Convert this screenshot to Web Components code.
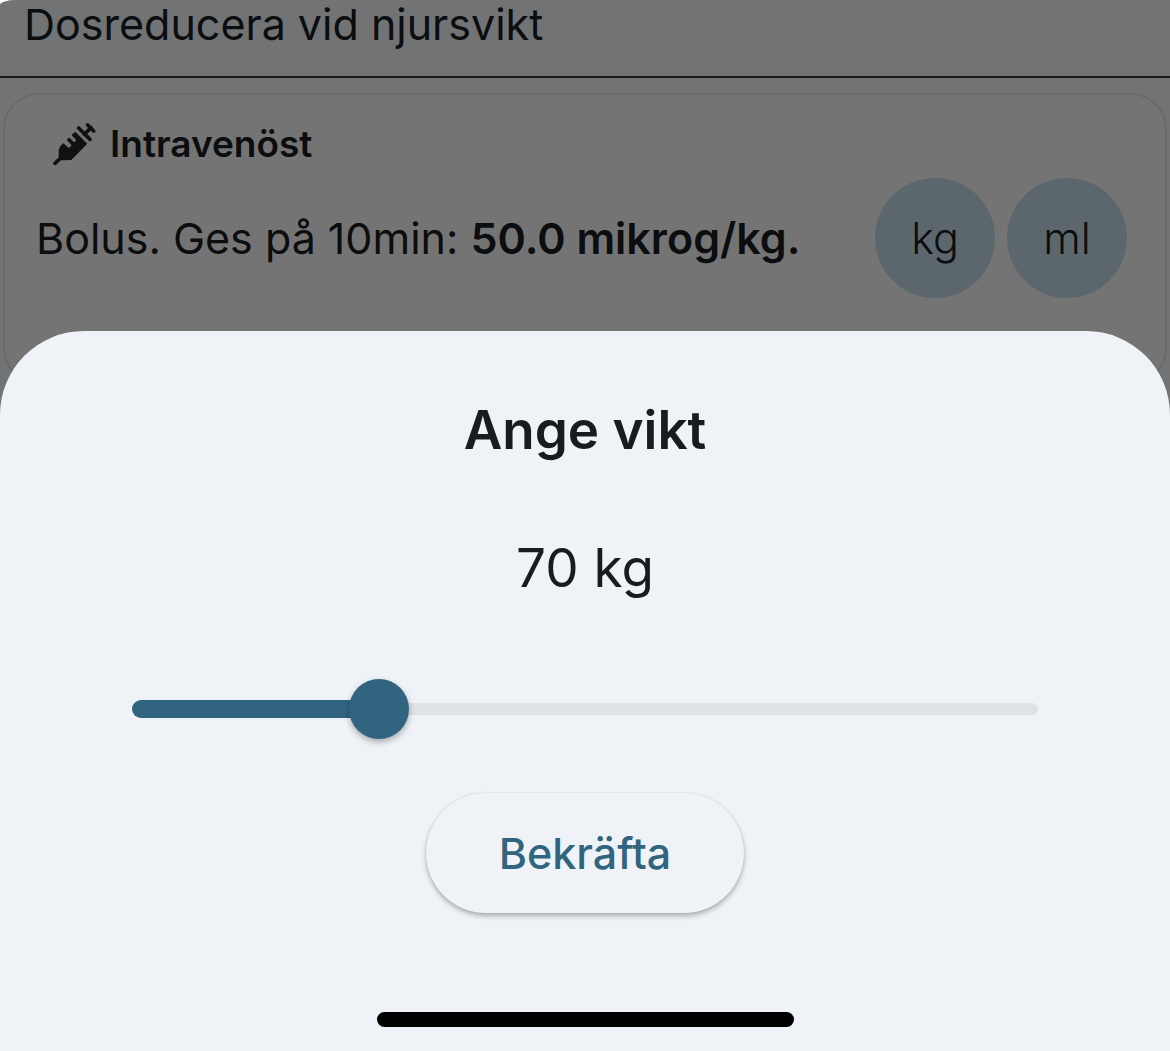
<!DOCTYPE html>
<html lang="sv">
<head>
<meta charset="utf-8">
<meta name="viewport" content="width=device-width, initial-scale=1">
<title>Ange vikt</title>
<style>
  html { height: 100%; background: #fff; }
  body { margin: 0; min-height: 100%; display: flex; color: #0b0d0e; font-family: Inter, Roboto, sans-serif; }
</style>
</head>
<body>
<dose-page>
  <dose-note slot="note">Dosreducera vid njursvikt</dose-note>
  <dose-card heading="Intravenöst">
    Bolus. Ges på 10min: <b>50.0 mikrog/kg.</b>
    <unit-button slot="units">kg</unit-button>
    <unit-button slot="units">ml</unit-button>
  </dose-card>
  <weight-sheet slot="sheet" heading="Ange vikt" value="70" max="260"></weight-sheet>
</dose-page>

<script>
class DosePage extends HTMLElement {
  constructor() {
    super();
    this.attachShadow({ mode: 'open' }).innerHTML = `
      <style>
        :host { display: block; flex: 1; min-width: 0; background: #717375; border-top-left-radius: 16px 5px; }
        main { padding: 15px 3px; }
      </style>
      <slot name="note"></slot>
      <main><slot></slot></main>
      <slot name="sheet"></slot>`;
  }
}

class DoseNote extends HTMLElement {
  constructor() {
    super();
    this.attachShadow({ mode: 'open' }).innerHTML = `
      <style>
        :host { display: block; border-bottom: 2px solid #17191a; }
        p { margin: 0; padding: 0 24px 28px; font-size: 43px; line-height: 48px; }
      </style>
      <p><slot></slot></p>`;
  }
}

class DoseCard extends HTMLElement {
  constructor() {
    super();
    this.attachShadow({ mode: 'open' }).innerHTML = `
      <style>
        :host { display: block; background: #747474; border: 2px solid #696a6c; border-radius: 36px; padding: 26px 38px 84px 31px; }
        h2 { display: flex; align-items: center; gap: 14px; margin: 0 0 11px; padding-left: 17px; font-size: 37px; line-height: 46px; font-weight: 600; }
        svg { width: 43px; height: 43px; }
        .row { display: flex; align-items: center; justify-content: space-between; gap: 12px; }
        p { margin: 0; flex: 1; font-size: 43px; line-height: 48px; }
        ::slotted(b) { font-weight: 600; }
        .units { display: flex; gap: 12px; }
      </style>
      <h2>
        <svg viewBox="39 36 129 129" aria-hidden="true" fill="none" stroke="#111" stroke-width="11" stroke-linecap="round">
          <path d="M45 157 62 141M116 51 150 85M133 70 153 50M143 42 161 60"/>
          <path fill="#111" stroke-width="4" stroke-linejoin="round" d="M58 118 62 107 70 99 86 114 98 103 83 87 87 82 102 97 112 87 97 72 106 65 139 98 93 145 66 146 58 140Z"/>
        </svg>
        <span></span>
      </h2>
      <div class="row"><p><slot></slot></p><div class="units"><slot name="units"></slot></div></div>`;
    this.shadowRoot.querySelector('span').textContent = this.getAttribute('heading');
  }
}

class UnitButton extends HTMLElement {
  constructor() {
    super();
    this.attachShadow({ mode: 'open' }).innerHTML = `
      <style>
        :host { display: block; }
        button { display: block; width: 120px; height: 120px; padding: 0; border: 0; border-radius: 50%; background: #5c676d; color: inherit; font: 300 43px/48px Inter, sans-serif; }
      </style>
      <button type="button"><slot></slot></button>`;
  }
}

class WeightSlider extends HTMLElement {
  constructor() {
    super();
    this.attachShadow({ mode: 'open' }).innerHTML = `
      <style>
        :host { display: grid; align-items: center; }
        .rail, .fill, input { grid-area: 1 / 1; }
        .rail { height: 12px; margin: 0 24px; border-radius: 6px; background: #dee1e5; }
        .fill { height: 18px; margin-left: 24px; border-radius: 9px; background: #31657f; width: calc(6px + (100% - 60px) * var(--ratio)); }
        input { appearance: none; -webkit-appearance: none; width: 100%; height: 60px; margin: 0; background: none; }
        input::-webkit-slider-thumb { -webkit-appearance: none; width: 60px; height: 60px; border-radius: 50%; background: #31657f; box-shadow: 0 3px 6px rgba(0,0,0,.3); }
      </style>
      <div class="rail"></div><div class="fill"></div>
      <input type="range" min="0" aria-label="Vikt i kg">`;
    const input = this.shadowRoot.querySelector('input');
    input.max = this.getAttribute('max');
    input.value = this.getAttribute('value');
    const sync = () => this.style.setProperty('--ratio', input.value / input.max);
    input.addEventListener('input', () => {
      sync();
      this.dispatchEvent(new CustomEvent('weight', { detail: input.value, bubbles: true }));
    });
    sync();
  }
}

class WeightSheet extends HTMLElement {
  constructor() {
    super();
    const value = this.getAttribute('value');
    this.attachShadow({ mode: 'open' }).innerHTML = `
      <style>
        :host { position: fixed; left: 0; right: 0; bottom: 0; display: block; background: #eff3f8; color: #181c1f; border-radius: 84px 84px 0 0; }
        section { display: flex; flex-direction: column; align-items: center; padding: 66px 108px 24px; }
        h1 { margin: 0; font: 600 53px/66px Inter, sans-serif; }
        output { margin-top: 72px; font: 400 53px/66px Inter, sans-serif; }
        weight-slider { align-self: stretch; margin-top: 78px; }
        button { margin-top: 54px; width: 318px; height: 120px; border: 0; border-radius: 60px; background: #eff3f8; color: #31657f; font: 500 43px/48px Inter, sans-serif; box-shadow: 0 3px 5px rgba(0,0,0,.28), 0 0 2px rgba(0,0,0,.1); }
        .home { width: 417px; height: 15px; margin-top: 99px; border-radius: 8px; background: #000; }
      </style>
      <section>
        <h1>${this.getAttribute('heading')}</h1>
        <output>${value} kg</output>
        <weight-slider value="${value}" max="${this.getAttribute('max')}"></weight-slider>
        <button type="button">Bekräfta</button>
        <div class="home"></div>
      </section>`;
    this.shadowRoot.addEventListener('weight', e => {
      this.shadowRoot.querySelector('output').textContent = e.detail + ' kg';
    });
  }
}

customElements.define('dose-page', DosePage);
customElements.define('dose-note', DoseNote);
customElements.define('dose-card', DoseCard);
customElements.define('unit-button', UnitButton);
customElements.define('weight-slider', WeightSlider);
customElements.define('weight-sheet', WeightSheet);
</script>
</body>
</html>
